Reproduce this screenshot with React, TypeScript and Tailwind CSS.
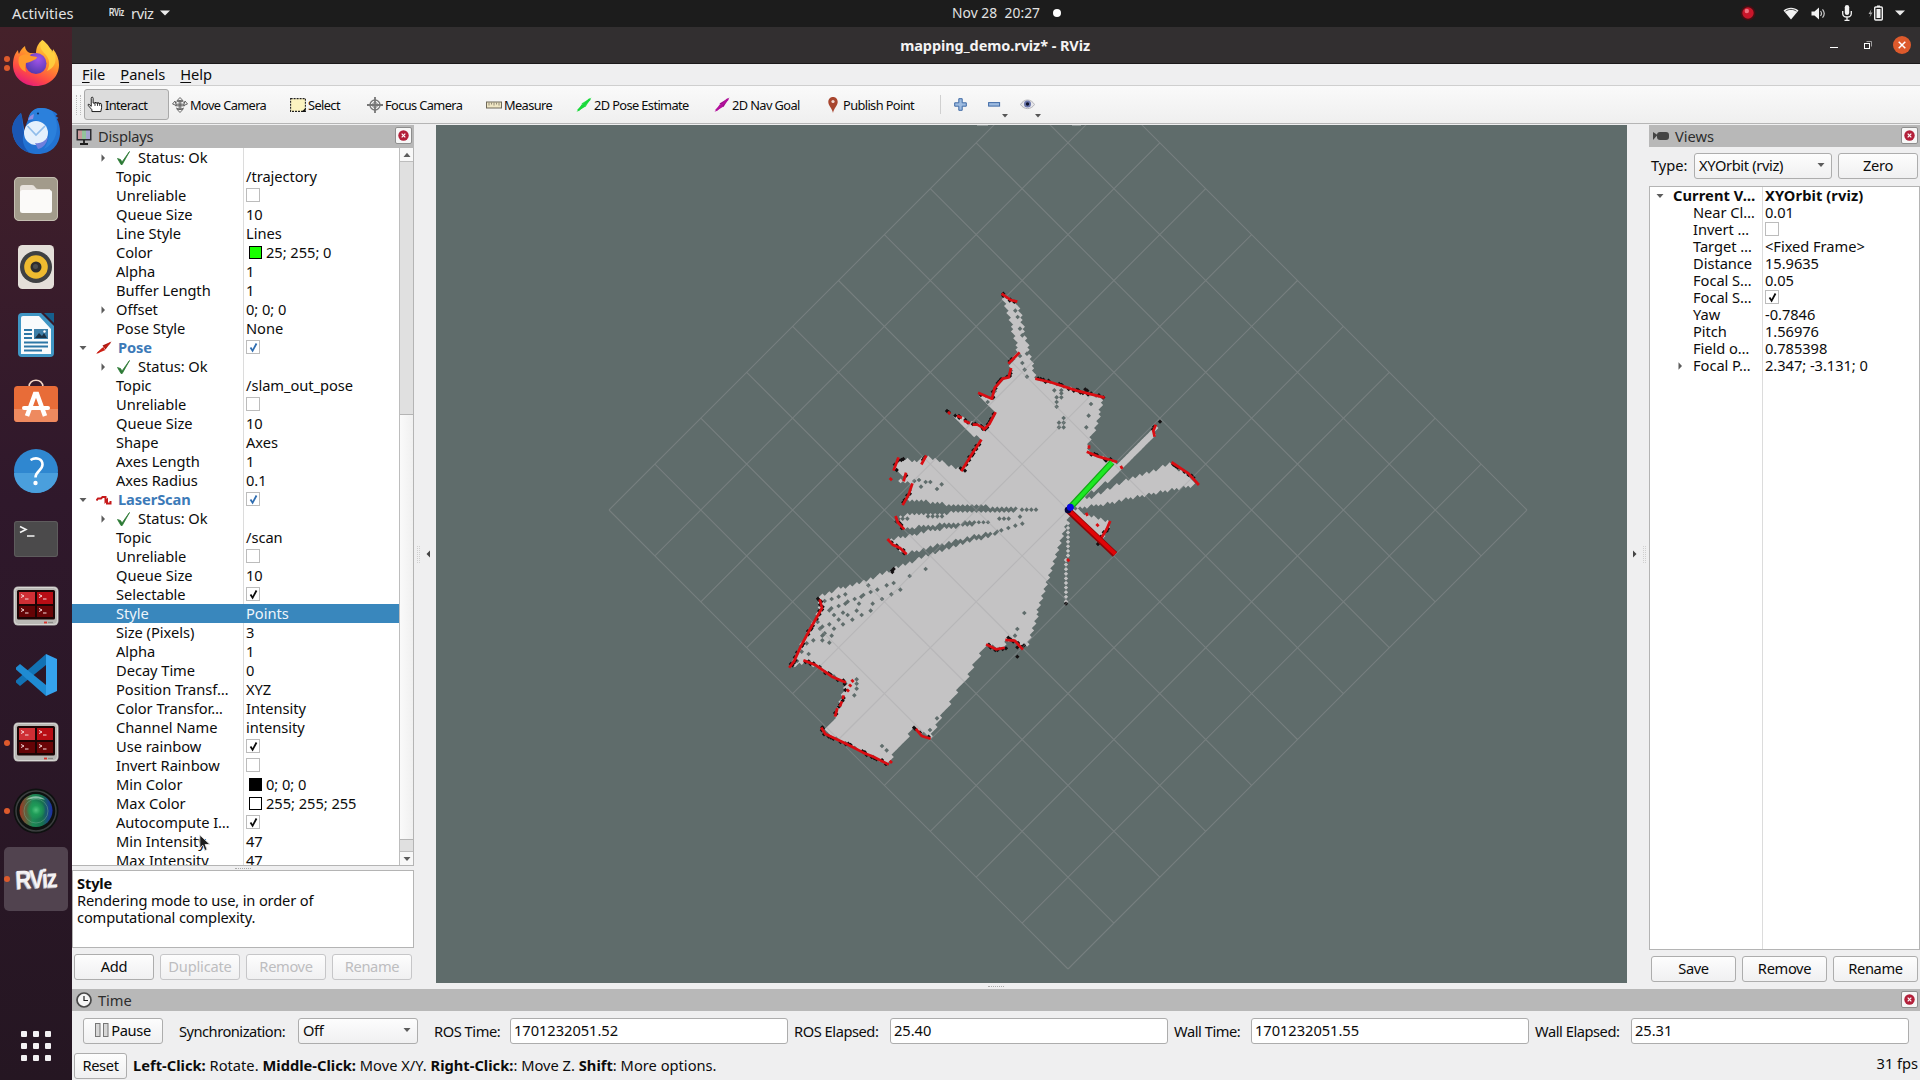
import React from "react";

type Pt = [number, number];

/* ---------- map data, in thirds of a pixel from (740, 260) ---------- */

const FREE: string[] = [
  "790,110 832,128 845,180 868,280 887,355 1090,415 1070,490 1045,555 1048,578 1125,605 1128,618 1258,487 1243,528 1185,582 1110,658 1040,705 1040,718 1100,690 1170,655 1295,612 1375,672 1290,690 1170,715 1080,735 1000,745 1040,765 1110,785 1090,830 1075,852 990,765 982,790 968,830 945,900 925,955 905,1010 890,1070 878,1110 862,1155 845,1165 825,1140 800,1140 790,1165 740,1155 710,1200 690,1240 665,1270 640,1315 615,1350 595,1385 572,1430 520,1405 490,1450 455,1490 445,1512 380,1480 320,1450 248,1410 285,1370 310,1300 318,1265 250,1230 195,1205 175,1212 155,1218 185,1150 215,1100 235,1050 240,1010 300,985 385,960 470,922 600,873 780,818 785,808 620,848 495,881 445,840 560,815 755,787 755,780 620,790 490,805 468,768 550,762 835,752 835,743 640,734 500,718 520,670 470,668 500,650 475,635 462,625 485,597 530,605 555,590 600,605 665,630 722,540 650,485 622,455 700,490 735,505 765,460 740,430 718,402 760,415 770,380 805,355 815,330 810,310 835,280 825,240 810,170 790,120",
];

const UNKNOWN =
  "826,152 833,171 840,206 847,226 861,281 840,288 847,309 854,329 861,350 943,391 964,391 964,400 964,412 950,412 950,426 950,440 1053,432 1046,467 1039,502 971,474 957,488 971,488 957,502 971,502 743,426 537,660 523,663 557,666 571,666 543,680 605,673 591,687 475,776 488,776 502,776 564,769 578,769 592,769 606,769 846,749 860,749 874,749 888,749 778,776 792,776 806,776 840,770 784,811 805,804 826,797 847,791 " +
  "557,927 509,948 461,969 440,976 481,989 454,1003 412,989 392,996 385,976 426,1017 398,1031 392,1052 365,1065 337,1079 364,1010 370,1005 344,1017 357,1031 350,1052 323,1025 316,1031 316,1003 296,1010 275,1017 254,1023 296,1038 274,1045 268,1051 309,1058 323,1065 282,1065 296,1079 309,1093 268,1093 282,1106 247,1100 240,1106 275,1127 254,1120 247,1127 247,1141 268,1148 220,1141 200,1150 233,1086 206,1182 171,1203 185,1175 350,1258 350,1271 350,1286 343,1306 853,1059 832,1107 825,1127 591,1375 570,1410 426,1458 440,1471";

const WALLS: string[] = [
  "788,103 812,120 828,124",
  "808,308 836,280",
  "812,328 806,352 788,356 764,384 756,416 742,410 718,400",
  "765,460 748,492 732,508",
  "655,469 662,472",
  "676,484 686,488",
  "702,494 712,494 730,504",
  "627,458 628,459",
  "722,542 696,582 666,630",
  "890,357 930,366 1010,392 1090,412",
  "1047,560 1047,562",
  "1044,577 1076,590 1128,605",
  "1144,621 1145,623",
  "1246,498 1240,512 1243,526",
  "1298,609 1345,640 1374,672",
  "1109,787 1100,808 1084,834",
  "1040,762 1041,764",
  "1072,795 1073,796",
  "984,900 985,901",
  "557,590 546,610",
  "474,596 462,628",
  "497,642 492,660",
  "452,657 453,658",
  "516,674 506,704 490,732",
  "468,772 474,788 490,805",
  "445,840 458,854 480,864 497,880",
  "240,1022 246,1044 212,1104 182,1160 162,1204 150,1220",
  "194,1202 228,1216 276,1250 314,1266",
  "337,1262 338,1263",
  "330,1276 331,1277",
  "323,1291 324,1292",
  "310,1310 309,1313",
  "304,1328 301,1336",
  "291,1348 286,1366",
  "246,1406 256,1422 320,1452 370,1478 400,1490 443,1512",
  "452,1505 453,1506",
  "530,1410 545,1428 568,1435",
  "742,1155 768,1168 790,1164",
  "800,1140 824,1142 846,1166",
];

const BLACK =
  "621,453 627,457 646,467 657,468 676,480 684,488 698,492 790,101 810,118 1090,412 1260,485 675,632 662,625 470,630 484,600 490,597 456,932 461,927 457,936 234,1016 236,1019 157,1216 314,1272 316,1290 311,1314 308,1322 297,1340 300,1334 289,1362 247,1402 249,1406 252,1423 522,1403 526,1407 832,1190 852,1156 832,1162 978,1031 1074,852 1078,847 566,1430 1036,388 1042,392 730,503 1098,602 798,1165 805,1133";

const parse = (s: string): Pt[] =>
  s
    .trim()
    .split(/\s+/)
    .map((p) => p.split(",").map(Number) as Pt);

const H = 6.9;
const diamond = (x: number, y: number, r = H + 0.4) => `M${x - r} ${y}L${x} ${y - r}L${x + r} ${y}L${x} ${y + r}Z`;

function inside(px: number, py: number, poly: Pt[]) {
  let hit = false;
  for (let i = 0, j = poly.length - 1; i < poly.length; j = i++) {
    const [xi, yi] = poly[i];
    const [xj, yj] = poly[j];
    if (yi > py !== yj > py && px < ((xj - xi) * (py - yi)) / (yj - yi) + xi) hit = !hit;
  }
  return hit;
}

function buildFree() {
  const polys = FREE.map(parse);
  let d = "";
  for (let r = 0; r < 210; r++) {
    for (let c = 0; c < 95; c++) {
      const x = 130 + c * 2 * H + (r % 2) * H;
      const y = 90 + r * H;
      if (polys.some((p) => inside(x, y, p))) d += diamond(x, y);
    }
  }
  for (let y = 790; y < 900; y += 13.8) d += diamond(984, y, 6.5);
  for (let y = 900; y < 1030; y += 13.8) d += diamond(978, y, 6.5);
  return d;
}

/* Occupied cells scattered along each scanned wall. */
function buildShadow() {
  let d = "";
  let n = 7;
  WALLS.forEach((w) => {
    const pts = parse(w);
    for (let i = 1; i < pts.length; i++) {
      const [x0, y0] = pts[i - 1];
      const [x1, y1] = pts[i];
      const len = Math.hypot(x1 - x0, y1 - y0);
      if (len < 5) continue;
      const nx = -(y1 - y0) / len;
      const ny = (x1 - x0) / len;
      for (let t = 4; t < len; t += 8) {
        n = (n * 73 + 41) % 101;
        if (n % 5 < 3) {
          const o = n % 2 ? 2.8 : -2.8;
          d += diamond(x0 + ((x1 - x0) * t) / len + o * nx, y0 + ((y1 - y0) * t) / len + o * ny, 6.5);
        }
      }
    }
  });
  return d + parse(BLACK).map(([x, y]) => diamond(x, y, 6.5)).join("");
}

const FREE_D = buildFree();
const UNKNOWN_D = parse(UNKNOWN).map(([x, y]) => diamond(x, y, 7)).join("");
const SHADOW_D = buildShadow();

const GRID_D = Array.from({ length: 11 }, (_, i) => {
  const s = 45.9;
  const a = `M${1068 - 459 + i * s} ${510 - i * s}l459 459`;
  const b = `M${1068 - 459 + i * s} ${510 + i * s}l459 -459`;
  return a + b;
}).join("");

function Scene() {
  return (
    <svg className="block h-[858px] w-[1191px] bg-[#5f6c6b]" viewBox="436 125 1191 858">
      <g transform="translate(740 260) scale(0.33333)">
        <path d={FREE_D} fill="#c4c3c4" />
        <path d={UNKNOWN_D} fill="#5f6c6b" />
        <path d={SHADOW_D} fill="#141011" />
      </g>
      <path d={GRID_D} stroke="#a0a0a4" strokeOpacity="0.36" strokeWidth="1.1" fill="none" />
      <path d="M977 125.5h11M1072 125.5h9" stroke="#8e9796" strokeWidth="1" />
      <g transform="translate(740 260) scale(0.33333)">
        {WALLS.map((w) => (
          <polyline key={w} points={w} fill="none" stroke="#d90d12" strokeWidth="8.2" strokeLinecap="square" strokeLinejoin="round" />
        ))}
        <path d="M1116 607L992 741" stroke="#11a813" strokeWidth="19" />
        <path d="M1116 607L992 741" stroke="#1ee824" strokeWidth="12" />
        <path d="M986 752L1125 883" stroke="#8f0507" strokeWidth="19" />
        <path d="M987 751L1126 882" stroke="#e00508" strokeWidth="12" />
        <circle cx="984" cy="750" r="10" fill="#06063a" />
        <circle cx="991" cy="742" r="10.5" fill="#0909e0" />
      </g>
    </svg>
  );
}

/* ---------- launcher ---------- */

function Firefox() {
  return (
    <svg className="h-[48px] w-[48px]" viewBox="0 0 48 48">
      <defs>
        <linearGradient id="ffA" x1="0.8" y1="0" x2="0.3" y2="1">
          <stop offset="0" stopColor="#ffe14b" />
          <stop offset="0.4" stopColor="#ff9a2a" />
          <stop offset="0.75" stopColor="#ff4a45" />
          <stop offset="1" stopColor="#e3197c" />
        </linearGradient>
        <radialGradient id="ffB" cx="0.6" cy="0.3" r="0.8">
          <stop offset="0" stopColor="#a254e8" />
          <stop offset="1" stopColor="#4a36a8" />
        </radialGradient>
      </defs>
      <path d="M30.500 1C36 5 39 10 40 14c1-1 1-3 1-4 4 5 6 10 6 16 0 12-10 21-23 21S1 38 1 26C1 19 3 14 6 11c0 1 .5 3 1 4 1-3 3-6 6-8 0 3 2 6 5 7 2 0 4 0 6 .5C24 9 26 4 30.500 1z" fill="url(#ffA)" />
      <circle cx="24" cy="24.500" r="10.500" fill="url(#ffB)" />
      <path d="M7 18c4-4 10-3 12-1 2 .6 5 .5 6 1 0 2-3 3-5 4-2 1-4 1.500-6 2-1 3-1 6 0 9C9 31 5 26 7 18z" fill="#ff9a2c" />
      <path d="M30 1c-4 7 0 11 4 15 4 5 4 11 1 16 7-3 10-9 8-16-2-6-8-8-13-15z" fill="#ffd341" opacity="0.85" />
    </svg>
  );
}

function Thunderbird() {
  return (
    <svg className="h-[48px] w-[50px]" viewBox="0 0 50 48">
      <path d="M10 6C3 12 .5 19 1.500 25 3 39 14 47 27 47c13 0 22-9 22-22 0-5-1-9-3-13l1.500-1-3-2 2-1.500c-1-1.500-3-2.500-5-3.500C37 1.500 33 .5 29 1c-7 .6-11 6-12 12-2 4-3 8-3 12C12 19 12 12 10 6z" fill="#2272d2" />
      <path d="M17 13C18 6 22 1.500 29 1c4-.5 8 .5 12 3 5 7 6 15 4 23-2 7-6 12-12 15 5-8 6-15 3-21-3-5-9-8-14-8z" fill="#2b80dc" />
      <path d="M10 6c-7 6-9.500 13-8.500 19C3 36 10 43 18 45.500 11 38 11 32 13 26 11 19 12 12 10 6z" fill="#1a57b4" />
      <circle cx="25" cy="26" r="12" fill="#e4f0fc" />
      <path d="M16.500 19l8.500 9 9-9" fill="none" stroke="#8fbcea" strokeWidth="1.700" />
      <path d="M24 36c5 1 9-1 13-6-1 7-5 11-10 12z" fill="#6f7fdc" />
      <path d="M17 13c1-3 3-5 6-6l-1 5c-2 0-3 1-5 1z" fill="#8f8ce0" />
      <circle cx="27" cy="6.500" r="1.100" fill="#0a2f66" />
    </svg>
  );
}

function Files() {
  return (
    <svg className="h-[46px] w-[46px]" viewBox="0 0 46 46">
      <rect x="1" y="1" width="44" height="44" rx="5" fill="#a29b8b" />
      <rect x="1.500" y="1.500" width="43" height="43" rx="4.500" fill="none" stroke="#c4beb1" />
      <path d="M7 12q0-3 3-3h9q2 0 3 2t3 2h12v10H7z" fill="#e7e2dc" />
      <rect x="7" y="14" width="32" height="23" rx="2.500" fill="#fbfaf9" />
    </svg>
  );
}

function Rhythmbox() {
  return (
    <svg className="h-[46px] w-[38px]" viewBox="0 0 38 46">
      <rect x="1" y="1" width="36" height="44" rx="4.500" fill="#e4dfd9" />
      <circle cx="19" cy="23" r="16" fill="#3f4143" />
      <circle cx="19" cy="23" r="11.800" fill="#eebb30" />
      <circle cx="19" cy="23" r="5.500" fill="#2c2d2e" />
      <circle cx="18.500" cy="22.500" r="2.500" fill="#4a4d4f" />
    </svg>
  );
}

function Writer() {
  return (
    <svg className="h-[46px] w-[38px]" viewBox="0 0 38 46">
      <path d="M5 1h19l13 13v27q0 4-4 4H5q-4 0-4-4V5q0-4 4-4z" fill="#3f96c4" />
      <path d="M27 1h10v10z" fill="#155f8d" />
      <path d="M6 4h16l12 13v25H4V6q0-2 2-2z" fill="#f9fbfc" />
      <path d="M7 18h8M7 22h8M7 26h8M7 30.500h24M7 34.500h24M7 38.500h18" stroke="#2c76a5" strokeWidth="1.800" />
      <rect x="17" y="17" width="14" height="10" fill="#3d7fa8" />
      <path d="M18 26l4-5 3 3 2-3 3 5z" fill="#1b3346" />
      <circle cx="27.500" cy="19.500" r="1.200" fill="#fff" />
    </svg>
  );
}

function Software() {
  return (
    <svg className="mb-[5px] h-[44px] w-[46px]" viewBox="0 0 46 44">
      <path d="M16 8c0-9 14-9 14 0" fill="none" stroke="#f3d5c4" strokeWidth="1.600" />
      <rect x="1" y="7" width="44" height="36" rx="3.500" fill="#e86c38" />
      <path d="M1 30h44v9q0 4-3.500 4h-37Q1 43 1 39z" fill="#ee8a5f" />
      <path d="M14 37l8-22h2l8 22" fill="none" stroke="#fff" strokeWidth="4.500" />
      <path d="M11 29h24" stroke="#fff" strokeWidth="4" strokeLinecap="round" />
    </svg>
  );
}

function HelpIcon() {
  return (
    <svg className="h-[46px] w-[46px]" viewBox="0 0 46 46">
      <circle cx="23" cy="23" r="22" fill="#2f87d0" />
      <path d="M1 25a22 20 0 0 0 44 0z" fill="#4a9fdd" />
      <path d="M17.500 12c6-3.500 12-1 12 4.500 0 6-7 6.500-7 13" fill="none" stroke="#fff" strokeWidth="2.600" />
      <circle cx="22.500" cy="35" r="2.200" fill="#fff" />
    </svg>
  );
}

function Terminal() {
  return (
    <svg className="h-[38px] w-[46px]" viewBox="0 0 46 38">
      <rect x="1" y="1" width="44" height="36" rx="3" fill="#4b4a4b" />
      <rect x="1.500" y="1.500" width="43" height="35" rx="2.500" fill="none" stroke="#5e5c5d" />
      <path d="M7 6.500l6 3-6 3M14 16h7.500" fill="none" stroke="#f3f3f3" strokeWidth="1.600" />
    </svg>
  );
}

function Terminator() {
  return (
    <svg className="mb-[2px] h-[40px] w-[46px]" viewBox="0 0 46 40">
      <rect x="0.500" y="0.500" width="45" height="39" rx="4.500" fill="#b9b8b4" />
      <rect x="1.500" y="1.500" width="43" height="37" rx="4" fill="none" stroke="#d9d8d5" />
      <rect x="4" y="4" width="38" height="29.500" rx="1.500" fill="#1c0505" />
      <rect x="6" y="6" width="16" height="12" fill="#cf2f35" />
      <rect x="24" y="6" width="16" height="12" fill="#b80d14" />
      <rect x="6" y="20" width="16" height="11" fill="#640406" />
      <rect x="24" y="20" width="16" height="11" fill="#6a0507" />
      <path d="M8 8.500l3 1.500-3 1.500M12 13h3.500M26 8.500l3 1.500-3 1.500M30 13h3.500M8 22.500l3 1.500-3 1.500M12 27h3.500M26 22.500l3 1.500-3 1.500M30 27h3.500" fill="none" stroke="#f6dada" strokeWidth="1" />
      <path d="M31 36.500h3" stroke="#d8342e" strokeWidth="1.800" />
      <path d="M35 36.500h5" stroke="#8c8b88" strokeWidth="1.300" />
    </svg>
  );
}

function VsCode() {
  return (
    <svg className="h-[44px] w-[44px]" viewBox="0 0 44 44">
      <path d="M32 1v11L6 33l-4-3.500v-2z" fill="#1272b4" />
      <path d="M2 16.500v-2L6 11l26 21v11z" fill="#1f8bd2" />
      <path d="M32 1l11 5v32l-11 5z" fill="#35a3ee" />
    </svg>
  );
}

function Lens() {
  return (
    <svg className="h-[46px] w-[46px]" viewBox="0 0 46 46">
      <defs>
        <linearGradient id="lnA" x1="0" y1="0" x2="1" y2="0">
          <stop offset="0" stopColor="#a33522" />
          <stop offset="0.4" stopColor="#1d8a56" />
          <stop offset="0.7" stopColor="#17714f" />
          <stop offset="1" stopColor="#1d2ca8" />
        </linearGradient>
        <radialGradient id="lnB">
          <stop offset="0" stopColor="#4fc47f" />
          <stop offset="0.5" stopColor="#1f9c58" />
          <stop offset="1" stopColor="#1f9c58" stopOpacity="0.2" />
        </radialGradient>
      </defs>
      <circle cx="23" cy="23" r="22.500" fill="#0e1110" />
      <circle cx="23" cy="23" r="20" fill="none" stroke="#3b3f3f" strokeWidth="1.500" />
      <circle cx="23" cy="22.500" r="16.500" fill="url(#lnA)" />
      <circle cx="23" cy="23" r="12" fill="none" stroke="#6ea58b" strokeOpacity="0.5" />
      <circle cx="23" cy="22" r="9" fill="url(#lnB)" />
      <path d="M13 12c5-5 15-5 19 0-5-2-13-2-19 0z" fill="#cfe8dd" opacity="0.6" />
    </svg>
  );
}

function RvizLogo() {
  return (
    <span className="-mt-px inline-block origin-center scale-x-85 -rotate-3 font-['Liberation_Sans'] text-[26px] leading-none font-bold tracking-[-2px] whitespace-nowrap text-[#f4f2f4] [text-shadow:-1px_1px_0_#b9b3b8]">
      RViz
    </span>
  );
}

const DOCK: { icon: React.ReactNode; dots?: number; active?: boolean }[] = [
  { icon: <Firefox />, dots: 2 },
  { icon: <Thunderbird /> },
  { icon: <Files /> },
  { icon: <Rhythmbox /> },
  { icon: <Writer /> },
  { icon: <Software /> },
  { icon: <HelpIcon /> },
  { icon: <Terminal /> },
  { icon: <Terminator /> },
  { icon: <VsCode /> },
  { icon: <Terminator />, dots: 1 },
  { icon: <Lens />, dots: 1 },
  { icon: <RvizLogo />, dots: 1, active: true },
];

function Dock() {
  return (
    <nav className="flex w-[72px] shrink-0 flex-col bg-linear-to-b from-[#45212a] via-[#2f182b] via-45% to-[#251622] pt-[2px]">
      {DOCK.map((d, i) => (
        <div key={i} className="relative flex h-[68px] items-center justify-center">
          <div className={d.active ? "flex h-16 w-16 items-center justify-center rounded-[5px] bg-[#51434f]" : "flex items-center justify-center"}>{d.icon}</div>
          <div className="absolute top-0 left-1 flex h-full flex-col justify-center gap-[3px]">
            {Array.from({ length: d.dots ?? 0 }, (_, k) => (
              <span key={k} className="h-[6px] w-[6px] rounded-full bg-[#dd5a2c]" />
            ))}
          </div>
        </div>
      ))}
      <div className="mt-auto flex h-[68px] items-center justify-center">
        <div className="grid grid-cols-3 gap-[6px]">
          {Array.from({ length: 9 }, (_, k) => (
            <span key={k} className="h-[6px] w-[6px] rounded-[1px] bg-[#f3f1f3]" />
          ))}
        </div>
      </div>
    </nav>
  );
}

/* ---------- widgets ---------- */

function Check({ on, blue }: { on: boolean; blue?: boolean }) {
  return (
    <span className="-mt-px flex h-[14px] w-[14px] items-center justify-center border border-[#bcbcbc] bg-white">
      {on && (
        <svg className="h-[11px] w-[11px]" viewBox="0 0 11 11">
          <path d="M2.500 5.500L4.600 8.800L8.500 1.500" fill="none" stroke={blue ? "#2f6db0" : "#0b0b0b"} strokeWidth="1.800" />
        </svg>
      )}
    </span>
  );
}

function Tri({ open }: { open: boolean }) {
  return (
    <svg className="h-2 w-2 shrink-0" viewBox="0 0 8 8">
      <path d={open ? "M0.500 2h7L4 6z" : "M2.500 0.300L6 4L2.500 7.700z"} fill="#5c5c5c" />
    </svg>
  );
}

function CloseBtn() {
  return (
    <span className="flex h-[17px] w-[17px] items-center justify-center rounded-[2px] border border-[#8e8e8e] bg-[#f7f7f7]">
      <svg className="h-[11px] w-[11px]" viewBox="0 0 11 11">
        <circle cx="5.500" cy="5.500" r="5.200" fill="#b3203a" />
        <path d="M3.700 3.700l3.600 3.600M7.300 3.700L3.700 7.300" stroke="#fff" strokeWidth="1.200" />
      </svg>
    </span>
  );
}

function Btn({ children, className = "", off }: { children: React.ReactNode; className?: string; off?: boolean }) {
  return (
    <button
      className={`flex h-[26px] items-center justify-center rounded-[3px] border bg-linear-to-b from-[#fdfdfd] to-[#f0f0f1] pb-[2px] tracking-[-0.350px] ${off ? "border-[#c6c6c8] text-[#bdbdbf]" : "border-[#adadad]"} ${className}`}
    >
      {children}
    </button>
  );
}

function Combo({ label, className }: { label: string; className: string }) {
  return (
    <Btn className={`${className} justify-between! pr-[6px] pl-1`}>
      <span>{label}</span>
      <Tri open />
    </Btn>
  );
}

type Kind = "status" | "group" | "prop" | "expand";
type Row = { k: Kind; name: string; value?: string; check?: boolean; blue?: boolean; swatch?: string; sel?: boolean; icon?: "pose" | "laser" };

const ROWS: Row[] = [
  { k: "status", name: "Status: Ok" },
  { k: "prop", name: "Topic", value: "/trajectory" },
  { k: "prop", name: "Unreliable", check: false },
  { k: "prop", name: "Queue Size", value: "10" },
  { k: "prop", name: "Line Style", value: "Lines" },
  { k: "prop", name: "Color", value: "25; 255; 0", swatch: "#19ff00" },
  { k: "prop", name: "Alpha", value: "1" },
  { k: "prop", name: "Buffer Length", value: "1" },
  { k: "expand", name: "Offset", value: "0; 0; 0" },
  { k: "prop", name: "Pose Style", value: "None" },
  { k: "group", name: "Pose", check: true, blue: true, icon: "pose" },
  { k: "status", name: "Status: Ok" },
  { k: "prop", name: "Topic", value: "/slam_out_pose" },
  { k: "prop", name: "Unreliable", check: false },
  { k: "prop", name: "Queue Size", value: "10" },
  { k: "prop", name: "Shape", value: "Axes" },
  { k: "prop", name: "Axes Length", value: "1" },
  { k: "prop", name: "Axes Radius", value: "0.1" },
  { k: "group", name: "LaserScan", check: true, blue: true, icon: "laser" },
  { k: "status", name: "Status: Ok" },
  { k: "prop", name: "Topic", value: "/scan" },
  { k: "prop", name: "Unreliable", check: false },
  { k: "prop", name: "Queue Size", value: "10" },
  { k: "prop", name: "Selectable", check: true },
  { k: "prop", name: "Style", value: "Points", sel: true },
  { k: "prop", name: "Size (Pixels)", value: "3" },
  { k: "prop", name: "Alpha", value: "1" },
  { k: "prop", name: "Decay Time", value: "0" },
  { k: "prop", name: "Position Transf…", value: "XYZ" },
  { k: "prop", name: "Color Transfor…", value: "Intensity" },
  { k: "prop", name: "Channel Name", value: "intensity" },
  { k: "prop", name: "Use rainbow", check: true },
  { k: "prop", name: "Invert Rainbow", check: false },
  { k: "prop", name: "Min Color", value: "0; 0; 0", swatch: "#000000" },
  { k: "prop", name: "Max Color", value: "255; 255; 255", swatch: "#ffffff" },
  { k: "prop", name: "Autocompute I…", check: true },
  { k: "prop", name: "Min Intensity", value: "47" },
  { k: "prop", name: "Max Intensity", value: "47" },
];

function TreeRow({ r }: { r: Row }) {
  return (
    <div className={`flex h-[19px] shrink-0 items-center ${r.sel ? "bg-[#3987bd] text-[#eef5fb]" : ""}`}>
      <div className={`flex h-full w-[172px] shrink-0 items-center border-r whitespace-nowrap ${r.sel ? "border-[#3987bd]" : "border-[#dcdcdc]"}`}>
        {r.k === "group" && (
          <>
            <span className="ml-[7px] flex w-[17px]"><Tri open /></span>
            <svg className="mr-[6px] h-4 w-4" viewBox="0 0 16 16">
              {r.icon === "pose" ? (
                <>
                  <path d="M0 14L6.500 7.500l3 2.500z" fill="#cf2216" />
                  <path d="M6.500 5.500L15.500 1.500l-6 8z" fill="#a51812" />
                  <path d="M1.500 13L14 3" stroke="#c92015" strokeWidth="1.600" />
                </>
              ) : (
                <path d="M0.500 8.500L2 6.500h3L6.500 5h3L9.500 9.500 11 8v3.500h3.500V9" fill="none" stroke="#c6191a" strokeWidth="2" />
              )}
            </svg>
            <b className="tracking-[-0.100px] text-[#3c7ab8]">{r.name}</b>
          </>
        )}
        {r.k === "status" && (
          <>
            <span className="ml-[27px] flex w-[18px]"><Tri open={false} /></span>
            <svg className="mr-2 h-[14px] w-[13px]" viewBox="0 0 13 14">
              <path d="M0.500 7.500l3 1L5 11 12.500 0.500 5.200 13.500H4z" fill="#2c7a35" stroke="#2c7a35" strokeWidth="0.800" />
            </svg>
            {r.name}
          </>
        )}
        {r.k === "expand" && (
          <>
            <span className="ml-[27px] flex w-[17px]"><Tri open={false} /></span>
            {r.name}
          </>
        )}
        {r.k === "prop" && <span className="ml-11">{r.name}</span>}
      </div>
      <div className="flex items-center pl-[2px] whitespace-nowrap">
        {r.swatch && <span className="mr-1 ml-[3px] h-[13px] w-[13px] border border-black" style={{ backgroundColor: r.swatch }} />}
        {r.check !== undefined && <Check on={r.check} blue={r.blue} />}
        {r.value}
      </div>
    </div>
  );
}

function Displays() {
  return (
    <aside className="flex w-[342px] shrink-0 flex-col">
      <header className="flex h-[23px] items-center bg-[#b8b8b8] pr-[2px] pl-1 text-[#2d2d2d]">
        <svg className="mr-[6px] h-[17px] w-4" viewBox="0 0 16 17">
          <rect x="0.500" y="1" width="15" height="11.500" fill="#2c2c30" />
          <rect x="2" y="2.500" width="4" height="8.500" fill="#c89a9c" />
          <rect x="6" y="2.500" width="4" height="8.500" fill="#93c39b" />
          <rect x="10" y="2.500" width="4" height="8.500" fill="#a5a4cf" />
          <path d="M8 12v3M4 16h8" stroke="#1d1d1d" strokeWidth="1.800" />
        </svg>
        <span className="tracking-[-0.200px]">Displays</span>
        <span className="-mt-[3px] ml-auto"><CloseBtn /></span>
      </header>
      <div className="flex h-[718px] overflow-hidden border-r border-b border-[#b4b4b4] bg-white">
        <div className="flex flex-1 flex-col overflow-hidden">
          {ROWS.map((r, i) => (
            <TreeRow key={i} r={r} />
          ))}
        </div>
        <div className="flex w-[14px] shrink-0 flex-col border-l border-[#bdbdbd] bg-[#e0e0e0]">
          <span className="flex h-[14px] items-center justify-center border-b border-[#bdbdbd] bg-[#f8f8f8]">
            <svg className="h-[6px] w-2" viewBox="0 0 8 6"><path d="M0.500 5h7L4 0.800z" fill="#5c5c5c" /></svg>
          </span>
          <span className="mt-[252px] h-[426px] border-y border-[#b4b4b4] bg-linear-to-r from-[#fafafa] to-[#f0f0f0]" />
          <span className="mt-auto flex h-[14px] items-center justify-center border-t border-[#bdbdbd] bg-[#f8f8f8]"><Tri open /></span>
        </div>
      </div>
      <div className="flex h-1 items-center justify-center"><span className="h-px w-4 border-t border-dotted border-[#aaa]" /></div>
      <div className="h-[78px] border border-[#b4b4b4] bg-white px-1 pt-[4px] leading-[17px] tracking-[-0.150px]">
        <b>Style</b>
        <p className="whitespace-nowrap">Rendering mode to use, in order of</p>
        <p>computational complexity.</p>
      </div>
      <div className="mt-[6px] flex gap-[6px] pl-[2px]">
        <Btn className="w-[80px]">Add</Btn>
        <Btn className="w-[80px] tracking-[-0.200px]!" off>Duplicate</Btn>
        <Btn className="w-[80px]" off>Remove</Btn>
        <Btn className="w-[80px]" off>Rename</Btn>
      </div>
    </aside>
  );
}

const VIEW_ROWS: { name: string; value?: string; check?: boolean; top?: boolean; arrow?: boolean }[] = [
  { name: "Current V…", value: "XYOrbit (rviz)", top: true },
  { name: "Near Cl…", value: "0.01" },
  { name: "Invert …", check: false },
  { name: "Target …", value: "<Fixed Frame>" },
  { name: "Distance", value: "15.9635" },
  { name: "Focal S…", value: "0.05" },
  { name: "Focal S…", check: true },
  { name: "Yaw", value: "-0.7846" },
  { name: "Pitch", value: "1.56976" },
  { name: "Field o…", value: "0.785398" },
  { name: "Focal P…", value: "2.347; -3.131; 0", arrow: true },
];

function Views() {
  return (
    <aside className="flex w-[271px] shrink-0 flex-col">
      <header className="flex h-[22px] items-center bg-[#b8b8b8] pr-[2px] pl-1 text-[#2d2d2d]">
        <svg className="mr-[6px] h-[10px] w-4" viewBox="0 0 16 10">
          <path d="M0 1l4.500 3L0 9z" fill="#444" />
          <rect x="4" y="1" width="12" height="8" rx="3" fill="#444" />
        </svg>
        <span>Views</span>
        <span className="-mt-[2px] ml-auto"><CloseBtn /></span>
      </header>
      <div className="mt-[6px] flex items-center pl-[2px]">
        <span className="w-[43px] pb-px">Type:</span>
        <Combo label="XYOrbit (rviz)" className="w-[138px]" />
        <Btn className="ml-[6px] w-[80px]">Zero</Btn>
      </div>
      <div className="mt-[7px] flex h-[764px] flex-col border border-[#b4b4b4] bg-white">
        {VIEW_ROWS.map((r, i) => (
          <div key={i} className={`flex h-[17px] shrink-0 items-center ${r.top ? "font-bold tracking-[0.080px]" : ""}`}>
            <div className="flex h-full w-[113px] shrink-0 items-center border-r border-[#dcdcdc] whitespace-nowrap">
              {r.top && <span className="mr-[9px] ml-[6px] flex"><Tri open /></span>}
              {r.arrow && <span className="mr-[9px] ml-[26px] flex"><Tri open={false} /></span>}
              <span className={r.top || r.arrow ? "" : "ml-[43px]"}>{r.name}</span>
            </div>
            <div className="pl-[2px] whitespace-nowrap">
              {r.check !== undefined && <Check on={r.check} />}
              {r.value}
            </div>
          </div>
        ))}
        <div className="w-[113px] flex-1 border-r border-[#dcdcdc]" />
      </div>
      <div className="mt-[6px] flex gap-[6px] pl-[2px]">
        <Btn className="w-[85px]">Save</Btn>
        <Btn className="w-[85px]">Remove</Btn>
        <Btn className="w-[85px]">Rename</Btn>
      </div>
    </aside>
  );
}

/* ---------- toolbar ---------- */

function Arrow({ a, b }: { a: string; b: string }) {
  return (
    <svg className="h-4 w-4" viewBox="0 0 16 16">
      <path d="M0.500 15L6 7l3.500 2.500z" fill={a} />
      <path d="M5.500 6.500L15.500 0.500 9.500 10z" fill={b} />
      <path d="M2 13.500L14 2" stroke={a} strokeWidth="2.200" />
    </svg>
  );
}

const hand = (
  <svg className="h-[17px] w-4" viewBox="0 0 17 17">
    <path d="M4.500 10.500V2q0-1.300 1-1.300T6.500 2v5h2v-.6h1.300V7h1.400v-.4h1.300v.9h1.200v-.3q1.800 0 1.800 1.300V12l-.8 4H5.200v-2L1.500 9.800Q.5 8.300 2 8.200z" fill="#fff" stroke="#111" strokeWidth="1" />
    <path d="M8.500 7v3M11.200 7v3M13.500 7.500V10" stroke="#111" strokeWidth="0.900" />
  </svg>
);
const move = (
  <svg className="h-4 w-4" viewBox="0 0 16 16" fill="#f2f2f2" stroke="#5a5a5a" strokeWidth="0.900">
    <path d="M3.500 7.200h9v1.600h-9zM7.200 3.500h1.600v9H7.200z" />
    <path d="M8 0.500l3 3.200H5zM8 15.500l3-3.200H5zM0.500 7l2.500-3 1.500 4.500zM15.500 7L13 4l-1.500 4.500z" />
    <path d="M3 6Q8 2 13 6M4 11q4 3 8 0" fill="none" />
  </svg>
);
const select = (
  <svg className="h-4 w-4" viewBox="0 0 16 16">
    <rect x="0.600" y="1.600" width="14.800" height="12.800" fill="#fcf3c0" stroke="#222" strokeWidth="1.100" strokeDasharray="2 1" />
    <path d="M15.500 11v4h-4z" fill="#111" />
  </svg>
);
const focus = (
  <svg className="h-4 w-4" viewBox="0 0 16 16" fill="none" stroke="#777">
    <circle cx="8" cy="8" r="5" strokeWidth="1.300" />
    <circle cx="8" cy="8" r="2.600" strokeWidth="0.900" />
    <path d="M8 0v16M0 8h16" strokeWidth="1.800" />
  </svg>
);
const ruler = (
  <svg className="h-4 w-4" viewBox="0 0 16 16">
    <rect x="0.500" y="5" width="15" height="6" fill="#efe6c3" stroke="#6e6858" />
    <path d="M3 5.500v3M5.500 5.500v2M8 5.500v3M10.500 5.500v2M13 5.500v3" stroke="#8a8270" strokeWidth="0.900" />
  </svg>
);
const pin = (
  <svg className="h-4 w-4" viewBox="0 0 16 16">
    <path d="M8 0C5 0 3.300 2.200 3.300 5c0 3.500 3.700 6 4.700 11 1-5 4.700-7.500 4.700-11C12.700 2.200 11 0 8 0z" fill="#a8462f" />
    <circle cx="8" cy="4.500" r="1.600" fill="#f0d9d2" />
  </svg>
);

const TOOLS: { icon: React.ReactNode; label: string; w: string; on?: boolean }[] = [
  { icon: hand, label: "Interact", w: "w-[85px]", on: true },
  { icon: move, label: "Move Camera", w: "w-[118px]" },
  { icon: select, label: "Select", w: "w-[77px]" },
  { icon: focus, label: "Focus Camera", w: "w-[119px]" },
  { icon: ruler, label: "Measure", w: "w-[90px]" },
  { icon: <Arrow a="#19d93a" b="#2fe04d" />, label: "2D Pose Estimate", w: "w-[138px]" },
  { icon: <Arrow a="#b3109c" b="#9a0e88" />, label: "2D Nav Goal", w: "w-[111px]" },
  { icon: pin, label: "Publish Point", w: "w-[118px]" },
];

function Toolbar() {
  return (
    <div className="flex h-[39px] items-center border-t border-b border-t-[#cfcfcf] border-b-[#b5b5b5] bg-linear-to-b from-[#fafafa] to-[#efefef] pl-1 text-[12.800px] tracking-[-0.600px]">
      <span className="mr-[3px] h-5 w-[5px] border-x border-dotted border-[#bbb]" />
      {TOOLS.map((t) => (
        <div
          key={t.label}
          className={`${t.w} flex h-[31px] shrink-0 items-center gap-[2px] rounded-[3px] border pl-[2px] whitespace-nowrap ${t.on ? "border-[#a9a9a9] bg-[#dcdcdc]" : "border-transparent"}`}
        >
          {t.icon}
          <span className="pt-px">{t.label}</span>
        </div>
      ))}
      <span className="mr-[13px] h-[19px] w-px bg-[#d0d0d0]" />
      <svg className="h-[13px] w-[13px]" viewBox="0 0 13 13">
        <path d="M4.800 0.700h3.400v4.100h4.100v3.400H8.200v4.100H4.800V8.200H.7V4.800h4.100z" fill="#9dbbe0" stroke="#3f6aa6" />
      </svg>
      <svg className="ml-[21px] h-[26px] w-5" viewBox="0 0 20 26">
        <rect x="0.600" y="10.600" width="11" height="3.500" fill="#9dbbe0" stroke="#3f6aa6" />
        <path d="M14 22h6l-3 3.500z" fill="#555" />
      </svg>
      <svg className="ml-[12px] h-[26px] w-6" viewBox="0 0 24 26">
        <path d="M0.500 12.500C4 6.500 11 6.500 14.500 12.500 11 18 4 18 .5 12.500z" fill="#e6e6ea" stroke="#b5b5ba" />
        <circle cx="7.500" cy="12" r="3.500" fill="#6b77ad" />
        <circle cx="7.500" cy="12" r="1.700" fill="#12152d" />
        <path d="M15 22h6l-3 3.500z" fill="#555" />
      </svg>
    </div>
  );
}

function Field({ label, value, gap }: { label: string; value: string; gap: string }) {
  return (
    <div className={`flex items-center ${gap}`}>
      <span className="flex-1 pt-px tracking-[-0.450px] whitespace-nowrap">{label}</span>
      <span className="flex h-[26px] w-[278px] items-center rounded-[3px] border border-[#adadad] bg-white pb-[2px] pl-[3px]">{value}</span>
    </div>
  );
}

function Splitter({ left }: { left: boolean }) {
  return (
    <div className={`flex w-[22px] items-center justify-between ${left ? "flex-row-reverse pr-[5px] pl-[3px]" : "pr-[3px] pl-[5px]"}`}>
      <svg className="h-2 w-[6px]" viewBox="0 0 6 8"><path d={left ? "M5 0.500v7L1.500 4z" : "M1 0.500v7L4.500 4z"} fill="#444" /></svg>
      <span className="h-[17px] w-[3px] border-x border-dotted border-[#cfcfcf]" />
    </div>
  );
}

export default function App() {
  return (
    <div className="relative flex h-[1080px] w-[1920px] flex-col overflow-hidden bg-[#efeff0] font-['Noto_Sans','Open_Sans',sans-serif] text-[14.670px] leading-none tracking-[-0.040px] text-[#0c0c0c]">
      <div className="flex h-[27px] shrink-0 items-center bg-[#1c1c1c] pb-px text-[14.670px] tracking-[0.050px] text-[#e3e3e3]">
        <span className="ml-3 w-[97px]">Activities</span>
        <b className="mr-[6px] inline-block w-[16px] origin-left scale-x-75 font-['Liberation_Sans'] text-[10px] tracking-[-0.300px]">RViz</b>
        <span className="tracking-[-0.400px]">rviz</span>
        <svg className="ml-[6px] h-[6px] w-[10px]" viewBox="0 0 10 6"><path d="M0 0.500h10L5 5.500z" fill="#ececec" /></svg>
        <span className="ml-auto w-[101px] text-[13.800px] whitespace-pre">Nov 28  20:27</span>
        <span className="mr-[859px] h-2 w-2 rounded-full bg-white" />
        <div className="absolute top-0 right-0 flex h-[26px] items-center">
          <svg className="mr-[27px] h-4 w-4" viewBox="0 0 16 16">
            <circle cx="8" cy="8" r="7.500" fill="#431014" />
            <circle cx="8" cy="8" r="5.700" fill="#c9162a" />
            <circle cx="6.800" cy="6" r="2.200" fill="#ee7280" />
          </svg>
          <svg className="mr-3 h-[13px] w-4" viewBox="0 0 16 13"><path d="M0.500 3.500C5-.2 11-.2 15.500 3.500L8 12.500z" fill="#f2f2f2" /><path d="M2.500 4.200C6 1.800 10 1.800 13.500 4.200" stroke="#1c1c1c" strokeWidth="0.800" fill="none" /></svg>
          <svg className="mr-[16px] h-[13px] w-[15px]" viewBox="0 0 15 13">
            <path d="M0.500 4.500h3L8 0.500v12L3.500 8.500h-3z" fill="#f2f2f2" />
            <path d="M9.500 4q2 2.500 0 5M11.500 2.300q3.500 4.200 0 8.400" fill="none" stroke="#c9c9c9" strokeWidth="1.200" />
          </svg>
          <svg className="mr-4 h-4 w-[10px]" viewBox="0 0 10 16">
            <rect x="2.800" y="0" width="4.400" height="10" rx="2.200" fill="#f2f2f2" />
            <path d="M0.700 6v2.500q0 3.500 4.300 3.500t4.300-3.500V6M5 12v3M2.500 15.300h5" fill="none" stroke="#f2f2f2" strokeWidth="1.300" />
          </svg>
          <svg className="mr-3 h-4 w-[15px]" viewBox="0 0 15 16">
            <path d="M3.500 4L0.500 9h2L1.500 12.500 4.500 7.500h-2z" fill="#aaa" />
            <path d="M9 0.500h3v1.500H9z" fill="#f2f2f2" />
            <rect x="6.700" y="2" width="7.600" height="13" rx="1" fill="none" stroke="#f2f2f2" strokeWidth="1.400" />
            <rect x="8.500" y="4" width="4" height="9" fill="#f2f2f2" />
          </svg>
          <svg className="mr-[15px] h-[6px] w-[10px]" viewBox="0 0 10 6"><path d="M0 0.500h10L5 5.500z" fill="#ececec" /></svg>
        </div>
      </div>

      <div className="flex min-h-0 flex-1">
        <Dock />
        <div className="flex w-[1848px] flex-col">
          <div className="flex h-[37px] shrink-0 items-center justify-end border-b border-[#1b191a] bg-[#322f30]">
            <b className="mr-[740px] pt-px text-[14.500px] tracking-[-0.080px] text-[#f4f3f3]">mapping_demo.rviz* - RViz</b>
            <span className="mt-[5px] h-px w-2 bg-white" />
            <svg className="mr-[21px] ml-[26px] h-2 w-2" viewBox="0 0 8 8" fill="none" stroke="#fff">
              <rect x="0.500" y="2.500" width="5" height="5" />
              <path d="M2.500 0.500h5v5" stroke="#bbb" strokeWidth="0.800" />
            </svg>
            <svg className="mr-[9px] h-[18px] w-[18px]" viewBox="0 0 18 18">
              <circle cx="9" cy="9" r="9" fill="#dd5a2c" />
              <path d="M5.700 5.700l6.600 6.600M12.300 5.700l-6.600 6.600" stroke="#fff" strokeWidth="1.500" />
            </svg>
          </div>
          <div className="flex h-[21px] shrink-0 items-center gap-[15px] pl-[10px]">
            <span><u className="underline-offset-2">F</u>ile</span>
            <span><u className="underline-offset-2">P</u>anels</span>
            <span><u className="underline-offset-2">H</u>elp</span>
          </div>
          <Toolbar />
          <div className="mt-px flex h-[858px]">
            <Displays />
            <Splitter left />
            <Scene />
            <Splitter left={false} />
            <Views />
          </div>
          <div className="flex h-[6px] shrink-0 items-center justify-center"><span className="h-px w-4 border-t border-dotted border-[#aaa]" /></div>
          <header className="flex h-[22px] shrink-0 items-center bg-[#b8b8b8] pr-[2px] pl-1 text-[#2d2d2d]">
            <svg className="mr-[6px] h-4 w-4" viewBox="0 0 16 16">
              <circle cx="8" cy="8" r="7" fill="#f5f5f5" stroke="#484848" strokeWidth="1.700" />
              <path d="M8 4v4.500h4" fill="none" stroke="#222" strokeWidth="1.200" />
            </svg>
            <span className="pt-px">Time</span>
            <span className="-mt-[2px] ml-auto"><CloseBtn /></span>
          </header>
          <div className="mt-[7px] flex h-[26px] shrink-0 items-center pl-[11px]">
            <Btn className="w-[80px] gap-[2px]">
              <svg className="h-[14px] w-[14px]" viewBox="0 0 14 14" fill="#d7d7d7" stroke="#777">
                <rect x="0.500" y="0.500" width="4.500" height="13" />
                <rect x="8.500" y="0.500" width="4.500" height="13" />
              </svg>
              Pause
            </Btn>
            <span className="ml-4 w-[119px] pt-px tracking-[-0.500px]">Synchronization:</span>
            <Combo label="Off" className="w-[120px]" />
            <Field label="ROS Time:" value="1701232051.52" gap="ml-4 w-[354px]" />
            <Field label="ROS Elapsed:" value="25.40" gap="ml-[6px] w-[374px]" />
            <Field label="Wall Time:" value="1701232051.55" gap="ml-[6px] w-[355px]" />
            <Field label="Wall Elapsed:" value="25.31" gap="ml-[6px] w-[374px]" />
          </div>
          <div className="mt-[9px] flex items-center pl-[2px]">
            <Btn className="w-[53px]">Reset</Btn>
            <p className="ml-[6px] pb-px tracking-[0.010px]">
              <b>Left-Click:</b> Rotate. <b>Middle-Click:</b> Move X/Y. <b>Right-Click:</b>: Move Z. <b>Shift</b>: More options.
            </p>
            <span className="-mt-[6px] mr-[2px] ml-auto">31 fps</span>
          </div>
        </div>
      </div>

      <svg className="absolute top-[834px] left-[199px] h-[18px] w-3" viewBox="0 0 12 18">
        <path d="M0.800 1v13l3-2.800 2 5.300 2.300-.9-2-5.100H11z" fill="#1d1d1d" stroke="#e6e6e6" strokeWidth="0.900" />
      </svg>
    </div>
  );
}
